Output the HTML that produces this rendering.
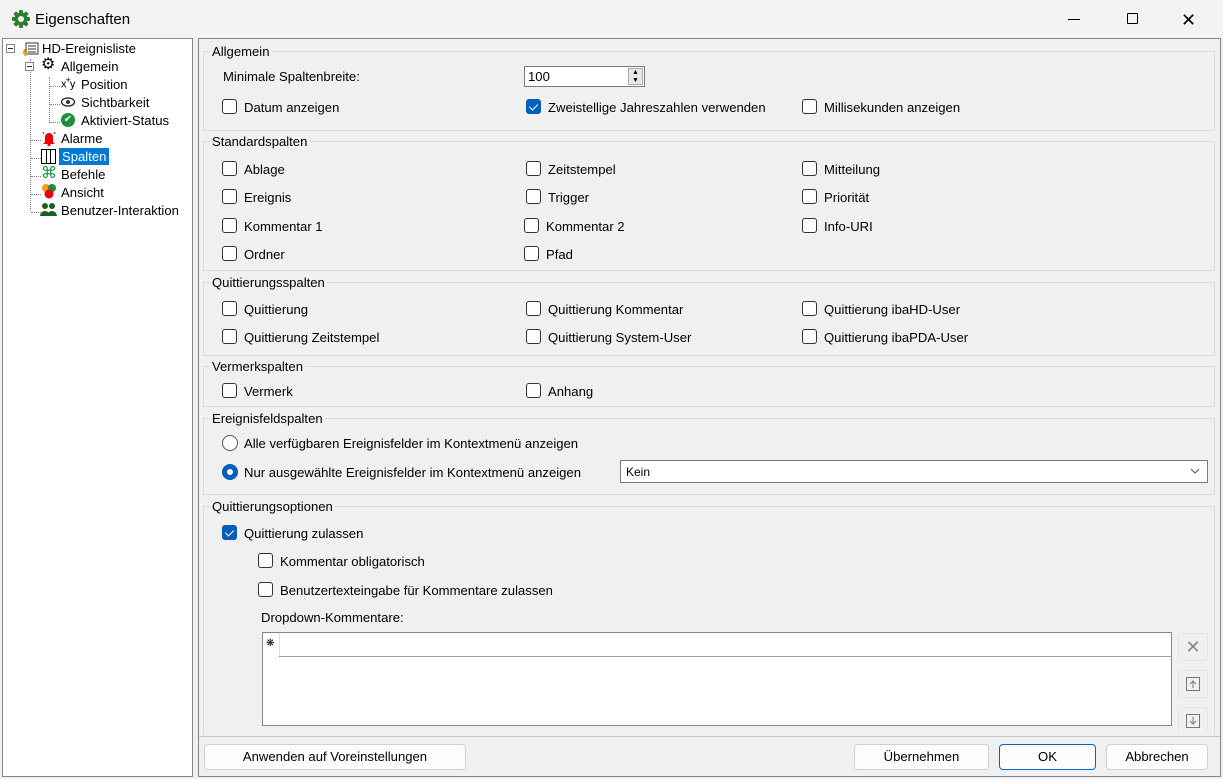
<!DOCTYPE html>
<html><head><meta charset="utf-8"><style>
*{box-sizing:border-box;margin:0;padding:0}
body{width:1223px;height:779px;background:#f0f0f0;font-family:"Liberation Sans",sans-serif;font-size:13.1px;color:#000;position:relative;overflow:hidden}
.a{position:absolute;white-space:nowrap}
.tb{position:absolute;left:0;top:0;width:1223px;height:38px;background:#f3f3f3}
.tree{position:absolute;left:2px;top:38px;width:191px;height:739px;background:#fff;border:1px solid #828790}
.rp{position:absolute;left:198px;top:38px;width:1023px;height:739px;border:1px solid #828790;background:#f0f0f0}
.gb{position:absolute;left:203px;width:1012px;border:1px solid #dcdcdc}
.gl{position:absolute;background:#f0f0f0;padding:0 2px;white-space:nowrap}
.cb{position:absolute;width:15px;height:15px;border:1px solid #333;border-radius:3px;background:#fff}
.cb.on{background:#005fb8;border-color:#005fb8}
.cb.on:after{content:"";position:absolute;left:4px;top:2px;width:4px;height:7px;border:solid #fff;border-width:0 1.5px 1.5px 0;transform:rotate(45deg)}
.rb{position:absolute;width:16px;height:16px;border:1px solid #555;border-radius:50%;background:#fff}
.rb.on{background:#005fb8;border-color:#005fb8}
.rb.on:after{content:"";position:absolute;left:4px;top:4px;width:6px;height:6px;border-radius:50%;background:#fff}
.btn{position:absolute;top:744px;height:26px;background:#fdfdfd;border:1px solid #d0d0d0;border-radius:4px;text-align:center;line-height:24px}
.tl{position:absolute;border-left:1px dotted #888}
.th{position:absolute;border-top:1px dotted #888}
</style></head><body>
<div class="tb"></div>
<svg class="a" style="left:11px;top:9px" width="20" height="20" viewBox="0 0 20 20"><g fill="#2e7d32"><circle cx="10" cy="10" r="6.5"/><rect x="8" y="1" width="4" height="18" rx="1"/><rect x="1" y="8" width="18" height="4" rx="1"/><rect x="8" y="1" width="4" height="18" rx="1" transform="rotate(45 10 10)"/><rect x="8" y="1" width="4" height="18" rx="1" transform="rotate(-45 10 10)"/></g><circle cx="10" cy="10" r="3" fill="#f3f3f3"/></svg>
<div class="a" style="left:35px;top:11px;font-size:15px">Eigenschaften</div>
<div class="a" style="left:1068px;top:19px;width:12px;height:1px;background:#000"></div>
<div class="a" style="left:1127px;top:13px;width:11px;height:11px;border:1px solid #000;border-radius:1px"></div>
<div class="a" style="left:1181px;top:10px;font-size:18px">✕</div>

<div class="tree">
<div class="tl" style="left:27px;top:20px;height:152px"></div>
<div class="tl" style="left:46px;top:38px;height:46px"></div>
<div class="th" style="left:47px;top:47px;width:10px"></div>
<div class="th" style="left:47px;top:65px;width:10px"></div>
<div class="th" style="left:47px;top:83px;width:10px"></div>
<div class="th" style="left:28px;top:101px;width:10px"></div>
<div class="th" style="left:28px;top:119px;width:10px"></div>
<div class="th" style="left:28px;top:137px;width:10px"></div>
<div class="th" style="left:28px;top:155px;width:10px"></div>
<div class="th" style="left:28px;top:173px;width:10px"></div>
<div class="a" style="left:3px;top:5px;width:9px;height:9px;border:1px solid #888;background:#fff"><div style="position:absolute;left:1px;top:3px;width:5px;height:1px;background:#333"></div></div>
<div class="a" style="left:22px;top:23px;width:9px;height:9px;border:1px solid #888;background:#fff"><div style="position:absolute;left:1px;top:3px;width:5px;height:1px;background:#333"></div></div>
<svg class="a" style="left:20px;top:3px" width="16" height="14"><rect x="3" y="1" width="12" height="11" fill="#fff" stroke="#333"/><path d="M5 4h8M5 7h8M5 10h8" stroke="#333"/><path d="M2 7l-1 4h2l-1 3" stroke="#f39c12" stroke-width="2" fill="none"/></svg>
<div class="a" style="left:39px;top:2px">HD-Ereignisliste</div>
<div class="a" style="left:38px;top:18px;font-size:16px;line-height:16px">⚙</div>
<div class="a" style="left:58px;top:20px">Allgemein</div>
<div class="a" style="left:58px;top:36px;font-size:11px;letter-spacing:-1px">x<sup>+</sup>y</div>
<div class="a" style="left:78px;top:38px">Position</div>
<svg class="a" style="left:58px;top:58px" width="14" height="10"><ellipse cx="7" cy="5" rx="6.5" ry="4" fill="#fff" stroke="#333" stroke-width="1.5"/><circle cx="7" cy="5" r="2" fill="#333"/></svg>
<div class="a" style="left:78px;top:56px">Sichtbarkeit</div>
<div class="a" style="left:58px;top:74px;width:14px;height:14px;border-radius:50%;background:#1e8e3e;color:#fff;font-size:10px;line-height:14px;text-align:center">✔</div>
<div class="a" style="left:78px;top:74px">Aktiviert-Status</div>
<svg class="a" style="left:38px;top:91px" width="16" height="16"><path d="M4 12V7a4 4 0 0 1 8 0v5l2 2H2z" fill="#e00"/><circle cx="8" cy="15" r="1.5" fill="#e00"/><path d="M2 2l1 2M14 2l-1 2" stroke="#e00"/></svg>
<div class="a" style="left:58px;top:92px">Alarme</div>
<svg class="a" style="left:38px;top:110px" width="15" height="15"><rect x="0.5" y="0.5" width="14" height="14" fill="#fff" stroke="#000"/><path d="M5.5 1v14M9.5 1v14" stroke="#000"/></svg>
<div class="a" style="left:56px;top:109px;background:#0078d7;color:#fff;padding:1px 3px;height:17px">Spalten</div>
<div class="a" style="left:38px;top:126px;color:#1e8e3e;font-size:16px;line-height:18px">⌘</div>
<div class="a" style="left:58px;top:128px">Befehle</div>
<svg class="a" style="left:38px;top:144px" width="16" height="17"><circle cx="5" cy="5" r="4" fill="#f39c12"/><circle cx="11" cy="5" r="4" fill="#1e8e3e"/><circle cx="8" cy="11" r="4.5" fill="#e00"/></svg>
<div class="a" style="left:58px;top:146px">Ansicht</div>
<svg class="a" style="left:37px;top:163px" width="18" height="15"><g fill="#1b5e20"><circle cx="5" cy="4" r="3"/><circle cx="12" cy="4" r="3"/><path d="M0 14a5 5 0 0 1 10 0zM7 14a5 5 0 0 1 10 0z"/></g></svg>
<div class="a" style="left:58px;top:164px">Benutzer-Interaktion</div>
</div>

<div class="rp"></div>

<div class="gb" style="top:51px;height:80px"></div>
<div class="gl" style="left:210px;top:44px">Allgemein</div>
<div class="a" style="left:223px;top:69px">Minimale Spaltenbreite:</div>
<div class="a" style="left:524px;top:66px;width:121px;height:21px;border:1px solid #7a7a7a;background:#fff;padding:2px 3px">100</div>
<div class="a" style="left:628px;top:68px;width:15px;height:17px;background:#e8e8e8;border:1px solid #aaa;font-size:7px;line-height:8px;text-align:center">▲<br>▼</div>
<div class="cb" style="left:222px;top:99px"></div><div class="a" style="left:244px;top:100px">Datum anzeigen</div>
<div class="cb on" style="left:526px;top:99px"></div><div class="a" style="left:548px;top:100px">Zweistellige Jahreszahlen verwenden</div>
<div class="cb" style="left:802px;top:99px"></div><div class="a" style="left:824px;top:100px">Millisekunden anzeigen</div>

<div class="gb" style="top:141px;height:130px"></div>
<div class="gl" style="left:210px;top:134px">Standardspalten</div>
<div class="cb" style="left:222px;top:161px"></div><div class="a" style="left:244px;top:162px">Ablage</div>
<div class="cb" style="left:526px;top:161px"></div><div class="a" style="left:548px;top:162px">Zeitstempel</div>
<div class="cb" style="left:802px;top:161px"></div><div class="a" style="left:824px;top:162px">Mitteilung</div>
<div class="cb" style="left:222px;top:189px"></div><div class="a" style="left:244px;top:190px">Ereignis</div>
<div class="cb" style="left:526px;top:189px"></div><div class="a" style="left:548px;top:190px">Trigger</div>
<div class="cb" style="left:802px;top:189px"></div><div class="a" style="left:824px;top:190px">Priorität</div>
<div class="cb" style="left:222px;top:218px"></div><div class="a" style="left:244px;top:219px">Kommentar 1</div>
<div class="cb" style="left:524px;top:218px"></div><div class="a" style="left:546px;top:219px">Kommentar 2</div>
<div class="cb" style="left:802px;top:218px"></div><div class="a" style="left:824px;top:219px">Info-URI</div>
<div class="cb" style="left:222px;top:246px"></div><div class="a" style="left:244px;top:247px">Ordner</div>
<div class="cb" style="left:524px;top:246px"></div><div class="a" style="left:546px;top:247px">Pfad</div>

<div class="gb" style="top:282px;height:74px"></div>
<div class="gl" style="left:210px;top:275px">Quittierungsspalten</div>
<div class="cb" style="left:222px;top:301px"></div><div class="a" style="left:244px;top:302px">Quittierung</div>
<div class="cb" style="left:526px;top:301px"></div><div class="a" style="left:548px;top:302px">Quittierung Kommentar</div>
<div class="cb" style="left:802px;top:301px"></div><div class="a" style="left:824px;top:302px">Quittierung ibaHD-User</div>
<div class="cb" style="left:222px;top:329px"></div><div class="a" style="left:244px;top:330px">Quittierung Zeitstempel</div>
<div class="cb" style="left:526px;top:329px"></div><div class="a" style="left:548px;top:330px">Quittierung System-User</div>
<div class="cb" style="left:802px;top:329px"></div><div class="a" style="left:824px;top:330px">Quittierung ibaPDA-User</div>

<div class="gb" style="top:366px;height:41px"></div>
<div class="gl" style="left:210px;top:359px">Vermerkspalten</div>
<div class="cb" style="left:222px;top:383px"></div><div class="a" style="left:244px;top:384px">Vermerk</div>
<div class="cb" style="left:526px;top:383px"></div><div class="a" style="left:548px;top:384px">Anhang</div>

<div class="gb" style="top:418px;height:77px"></div>
<div class="gl" style="left:210px;top:411px">Ereignisfeldspalten</div>
<div class="rb" style="left:222px;top:435px"></div><div class="a" style="left:244px;top:436px">Alle verfügbaren Ereignisfelder im Kontextmenü anzeigen</div>
<div class="rb on" style="left:222px;top:464px"></div><div class="a" style="left:244px;top:465px">Nur ausgewählte Ereignisfelder im Kontextmenü anzeigen</div>
<div class="a" style="left:620px;top:460px;width:588px;height:23px;border:1px solid #7a7a7a;background:#fff;padding:4px 5px;font-size:12px">Kein</div>
<svg class="a" style="left:1190px;top:467px" width="10" height="8"><path d="M1 2l4 4 4-4" stroke="#555" fill="none"/></svg>

<div class="gb" style="top:506px;height:229px;border-bottom:none"></div>
<div class="gl" style="left:210px;top:499px">Quittierungsoptionen</div>
<div class="cb on" style="left:222px;top:525px"></div><div class="a" style="left:244px;top:526px">Quittierung zulassen</div>
<div class="cb" style="left:258px;top:553px"></div><div class="a" style="left:280px;top:554px">Kommentar obligatorisch</div>
<div class="cb" style="left:258px;top:582px"></div><div class="a" style="left:280px;top:583px">Benutzertexteingabe für Kommentare zulassen</div>
<div class="a" style="left:261px;top:610px">Dropdown-Kommentare:</div>
<div class="a" style="left:262px;top:632px;width:910px;height:94px;border:1px solid #828790;background:#fff"></div>
<div class="a" style="left:279px;top:656px;width:892px;height:1px;background:#a0a0a0"></div>
<div class="a" style="left:279px;top:633px;width:1px;height:23px;background:#e0e0e0"></div>
<div class="a" style="left:266px;top:638px;font-size:10px">❋</div>
<div class="a" style="left:1178px;top:633px;width:30px;height:28px;border:1px solid #e4e4e4;border-radius:3px;color:#888;font-size:18px;text-align:center;line-height:27px">✕</div>
<div class="a" style="left:1178px;top:670px;width:30px;height:28px;border:1px solid #e4e4e4;border-radius:3px"><svg style="position:absolute;left:7px;top:6px" width="15" height="15"><rect x="0.5" y="0.5" width="13" height="13" fill="none" stroke="#777"/><path d="M7 11V4M4 7l3-3 3 3" stroke="#777" fill="none"/></svg></div>
<div class="a" style="left:1178px;top:707px;width:30px;height:26px;border:1px solid #e4e4e4;border-bottom:none;border-radius:3px;overflow:hidden"><svg style="position:absolute;left:7px;top:6px" width="15" height="15"><rect x="0.5" y="0.5" width="13" height="13" fill="none" stroke="#777"/><path d="M7 3v7M4 7l3 3 3-3" stroke="#777" fill="none"/></svg></div>

<div class="a" style="left:199px;top:736px;width:1021px;height:1px;background:#c8c8c8"></div>
<div class="btn" style="left:204px;width:262px">Anwenden auf Voreinstellungen</div>
<div class="btn" style="left:854px;width:135px">Übernehmen</div>
<div class="btn" style="left:999px;width:97px;border:1px solid #0067c0">OK</div>
<div class="btn" style="left:1106px;width:102px">Abbrechen</div>
</body></html>
